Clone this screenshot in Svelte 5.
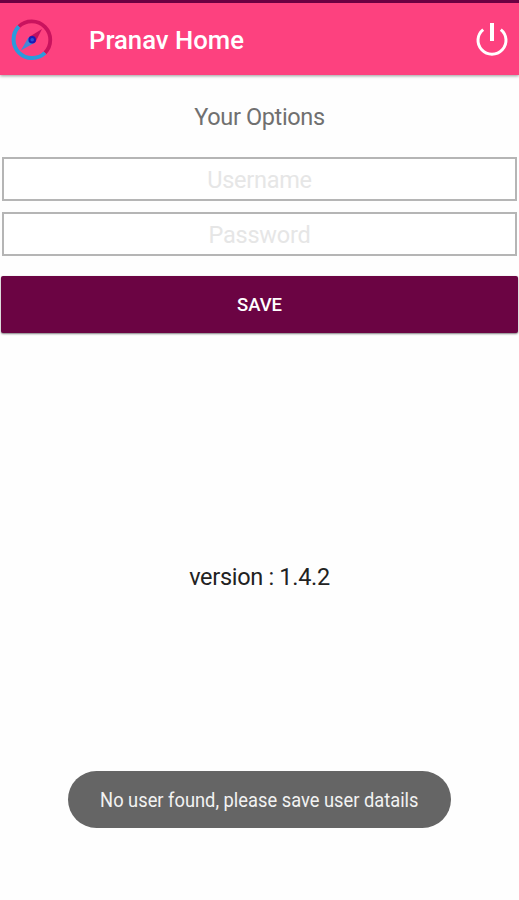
<script lang="ts">
	let username = $state('');
	let password = $state('');

	const version = '1.4.2';
	const toast = 'No user found, please save user datails';
</script>

<div class="screen">
	<header class="appbar">
		<svg class="logo" viewBox="0 0 42 42" aria-hidden="true">
			<path d="M7.8 7.5A18.6 18.6 0 0 1 34 33.9" fill="none" stroke="#c9135e" stroke-width="3.8" />
			<path d="M34 33.9A18.6 18.6 0 0 1 7.8 7.5" fill="none" stroke="#2a9bdc" stroke-width="4" />
			<path d="M31 10L24.6 22.8L18.4 17.8Z" fill="#c01060" />
			<path d="M9.8 31.6L17.5 18.2L24 23.4Z" fill="#4289d8" />
			<circle cx="21.2" cy="20.8" r="2.8" fill="#2c50d8" stroke="#1b18b4" stroke-width="2" />
		</svg>
		<h1 class="title">Pranav Home</h1>
		<button type="button" class="power" aria-label="Log out">
			<svg viewBox="0 0 34 34" aria-hidden="true">
				<path d="M8.2 6.6A14 13.8 0 1 0 25.8 6.6" fill="none" stroke="#fff" stroke-width="3" />
				<path d="M17 0V18" fill="none" stroke="#fff" stroke-width="4" />
			</svg>
		</button>
	</header>

	<main class="content">
		<h2 class="heading">Your Options</h2>
		<input class="field" type="text" placeholder="Username" bind:value={username} />
		<input class="field" type="password" placeholder="Password" bind:value={password} />
		<button type="button" class="save">SAVE</button>
		<p class="version">version : {version}</p>
	</main>

	<div class="toast" role="status"><span class="toast-text">{toast}</span></div>
</div>

<style>
	:global(body) {
		background: #fefefe;
	}

	.screen {
		display: flex;
		flex-direction: column;
		box-sizing: border-box;
		height: 900px;
		overflow: hidden;
		border-top: 3px solid #6b0042;
		background: #fefefe;
		font-family: Roboto, sans-serif;
	}

	.appbar {
		display: flex;
		align-items: center;
		flex: none;
		box-sizing: border-box;
		height: 72px;
		padding: 1px 10px 0 11px;
		background: #fd417f;
		box-shadow: 0 1px 3px rgba(0, 0, 0, 0.4);
	}

	.logo {
		flex: none;
		width: 42px;
		height: 42px;
	}

	.title {
		flex: 1;
		margin: 0 0 0 36px;
		font-size: 25.7px;
		font-weight: 500;
		line-height: 30px;
		color: #fff;
	}

	.power {
		width: 34px;
		height: 34px;
		padding: 0;
		border: none;
		background: none;
	}
	.power svg {
		display: block;
	}

	.content {
		display: flex;
		flex-direction: column;
		flex: none;
		padding: 28px 1px 0;
		text-align: center;
	}

	.heading {
		margin: 0 0 26px;
		font-size: 23.5px;
		font-weight: 400;
		line-height: 28px;
		letter-spacing: -0.36px;
		color: #707070;
	}

	.field {
		box-sizing: border-box;
		height: 44px;
		margin: 0 1px 11px;
		padding: 2px 0 0;
		border: 2px solid #b5b5b5;
		border-radius: 0;
		outline: none;
		background: #fff;
		font-family: inherit;
		font-size: 23.5px;
		letter-spacing: -0.25px;
		text-align: center;
		color: #222;
	}
	.field::placeholder {
		color: #e6e6e6;
		opacity: 1;
	}

	.save {
		height: 57px;
		margin-top: 9px;
		padding: 0;
		border: none;
		border-radius: 2px;
		background: #6b0443;
		box-shadow: 0 1px 2px rgba(0, 0, 0, 0.5);
		font-family: inherit;
		font-size: 18.5px;
		font-weight: 500;
		color: #fff;
	}

	.version {
		margin: 230px 0 0;
		font-size: 23.5px;
		line-height: 28px;
		letter-spacing: -0.3px;
		color: #222;
	}

	.toast {
		display: flex;
		align-items: center;
		justify-content: center;
		align-self: center;
		width: 383px;
		height: 57px;
		margin-top: 180px;
		border-radius: 29px;
		background: #656565;
	}

	.toast-text {
		font-size: 20.5px;
		white-space: nowrap;
		color: #f2f2f2;
		transform: scaleX(0.893);
	}
</style>
